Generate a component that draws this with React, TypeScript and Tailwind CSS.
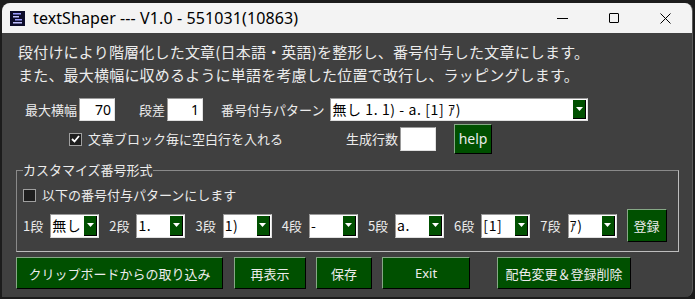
import type { ReactNode } from "react";

const jp = "font-['Noto_Sans_CJK_JP',sans-serif]";

function GreenButton({ className, children }: { className: string; children: ReactNode }) {
  return (
    <button
      className={`flex items-center justify-center bg-[#005000] border border-t-[#86a886] border-l-[#86a886] border-r-black border-b-black text-[13px] text-[#ececec] leading-none whitespace-nowrap ${className}`}
    >
      {children}
    </button>
  );
}

function TextBox({ className, value = "" }: { className: string; value?: string }) {
  return (
    <div
      className={`flex items-center justify-end bg-white border border-t-[#9a9a9a] border-l-[#9a9a9a] border-r-[#e0e0e0] border-b-[#e0e0e0] pr-[3px] text-[14px] text-black font-['Noto_Sans',sans-serif] ${className}`}
    >
      {value}
    </div>
  );
}

function Combo({ className, value }: { className: string; value: string }) {
  return (
    <div
      className={`flex items-stretch bg-white border border-t-[#9a9a9a] border-l-[#9a9a9a] border-r-[#e0e0e0] border-b-[#e0e0e0] ${className}`}
    >
      <div className="flex-1 flex items-center pl-[1px] text-[14px] text-black whitespace-nowrap overflow-hidden font-['Noto_Sans_CJK_JP',sans-serif] tracking-[0.6px]">
        {value}
      </div>
      <div className="w-[13px] my-px mr-px bg-[#005000] border-r border-b border-black flex items-center justify-center">
        <svg width="7" height="4" viewBox="0 0 7 4">
          <path d="M0 0H7L3.5 4Z" fill="white" />
        </svg>
      </div>
    </div>
  );
}

function CheckBox({ checked }: { checked: boolean }) {
  return (
    <div className="w-[13px] h-[13px] border border-[#a0a0a0] bg-[#1e1e1e] flex items-center justify-center">
      {checked && (
        <svg width="9" height="8" viewBox="0 0 9 8">
          <path d="M1 4L3.5 6.5L8 1" stroke="white" strokeWidth="1.8" fill="none" />
        </svg>
      )}
    </div>
  );
}

const levels = [
  { label: "1段", value: "無し" },
  { label: "2段", value: "1." },
  { label: "3段", value: "1)" },
  { label: "4段", value: "-" },
  { label: "5段", value: "a." },
  { label: "6段", value: "[1]" },
  { label: "7段", value: "ｱ)" },
];

export default function App() {
  return (
    <div className={`w-[695px] h-[299px] bg-[#1c1c1c] pt-[3px] pl-[2px] overflow-hidden ${jp}`}>
      <div className="w-[691px] h-[294px] rounded-t-[8px] rounded-br-[8px] overflow-hidden bg-[#404040] border-r border-[#5a5a5a] flex flex-col">
        {/* title bar */}
        <div className="h-[30px] bg-[#f3f3f3] flex items-center shrink-0">
          <svg className="ml-[8px]" width="15" height="15" viewBox="0 0 15 15">
            <rect width="15" height="15" fill="#0c0c2a" />
            <rect x="3" y="2" width="8" height="1.5" fill="#9a9aff" />
            <rect x="3" y="5" width="6" height="1.5" fill="#c0c0ff" />
            <rect x="5" y="8" width="7" height="1.5" fill="#9a9aff" />
            <rect x="3" y="11" width="9" height="1.5" fill="#c0c0ff" />
          </svg>
          <span className="ml-[8px] text-[16px] text-black font-['Noto_Sans',sans-serif] tracking-[0.1px]">
            textShaper --- V1.0 - 551031(10863)
          </span>
          <div className="ml-auto flex items-center h-full">
            <div className="w-[52px] flex justify-center">
              <div className="w-[11px] h-px bg-black" />
            </div>
            <div className="w-[52px] flex justify-center">
              <div className="w-[10px] h-[10px] border border-black rounded-[1px]" />
            </div>
            <div className="w-[50px] flex justify-center mr-[2px]">
              <svg width="11" height="11" viewBox="0 0 11 11">
                <path d="M0.5 0.5L10.5 10.5M10.5 0.5L0.5 10.5" stroke="black" strokeWidth="1" />
              </svg>
            </div>
          </div>
        </div>

        {/* body */}
        <div className="flex flex-col text-[#ececec] text-[13px]">
          <div className="pl-[16px] pt-[7px] text-[15px] leading-[23px] tracking-[0.2px]">
            <div>段付けにより階層化した文章(日本語・英語)を整形し、番号付与した文章にします。</div>
            <div>また、最大横幅に収めるように単語を考慮した位置で改行し、ラッピングします。</div>
          </div>

          <div className="flex items-center h-[23px] mt-[12px] pl-[23px]">
            <span>最大横幅</span>
            <TextBox className="ml-[2px] w-[36px] h-[23px]" value="70" />
            <span className="ml-[24px]">段差</span>
            <TextBox className="ml-[2px] w-[36px] h-[23px]" value="1" />
            <span className="ml-[18px]">番号付与パターン</span>
            <Combo className="ml-[6px] w-[258px] h-[23px]" value="無し 1. 1) - a. [1] ｱ)" />
          </div>

          <div className="flex items-center h-[30px] mt-[3px]">
            <div className="ml-[67px]">
              <CheckBox checked />
            </div>
            <span className="ml-[6px]">文章ブロック毎に空白行を入れる</span>
            <span className="ml-[63px]">生成行数</span>
            <TextBox className="ml-[2px] w-[36px] h-[24px]" />
            <GreenButton className="ml-[18px] w-[38px] h-[30px] text-[14px] font-['Noto_Sans',sans-serif]">help</GreenButton>
          </div>

          <fieldset className="ml-[14px] mt-[8px] w-[663px] h-[90px] border border-t-[#8a8a8a] border-l-[#8a8a8a] border-r-[#bdbdbd] border-b-[#bdbdbd] px-[6px] pb-0 pt-0">
            <legend className="px-0 leading-[16px]">カスタマイズ番号形式</legend>
            <div className="flex items-center mt-[9px] h-[16px]">
              <CheckBox checked={false} />
              <span className="ml-[6px]">以下の番号付与パターンにします</span>
            </div>
            <div className="flex items-center mt-[6px] h-[33px]">
              {levels.map((l, i) => (
                <div key={i} className={`flex items-center ${i === 0 ? "ml-0" : "ml-[10px]"}`}>
                  <span>{l.label}</span>
                  <Combo className="ml-[7px] w-[49px] h-[24px]" value={l.value} />
                </div>
              ))}
              <GreenButton className="ml-[10px] w-[40px] h-[33px]">登録</GreenButton>
            </div>
          </fieldset>

          <div className="flex items-center h-[32px] mt-[5px] pl-[14px]">
            <GreenButton className="w-[207px] h-[32px]">クリップボードからの取り込み</GreenButton>
            <GreenButton className="ml-[11px] w-[72px] h-[32px]">再表示</GreenButton>
            <GreenButton className="ml-[10px] w-[56px] h-[32px]">保存</GreenButton>
            <GreenButton className="ml-[10px] w-[88px] h-[32px] font-['Noto_Sans',sans-serif]">Exit</GreenButton>
            <GreenButton className="ml-[27px] w-[134px] h-[32px]">配色変更＆登録削除</GreenButton>
          </div>
        </div>
      </div>
    </div>
  );
}
